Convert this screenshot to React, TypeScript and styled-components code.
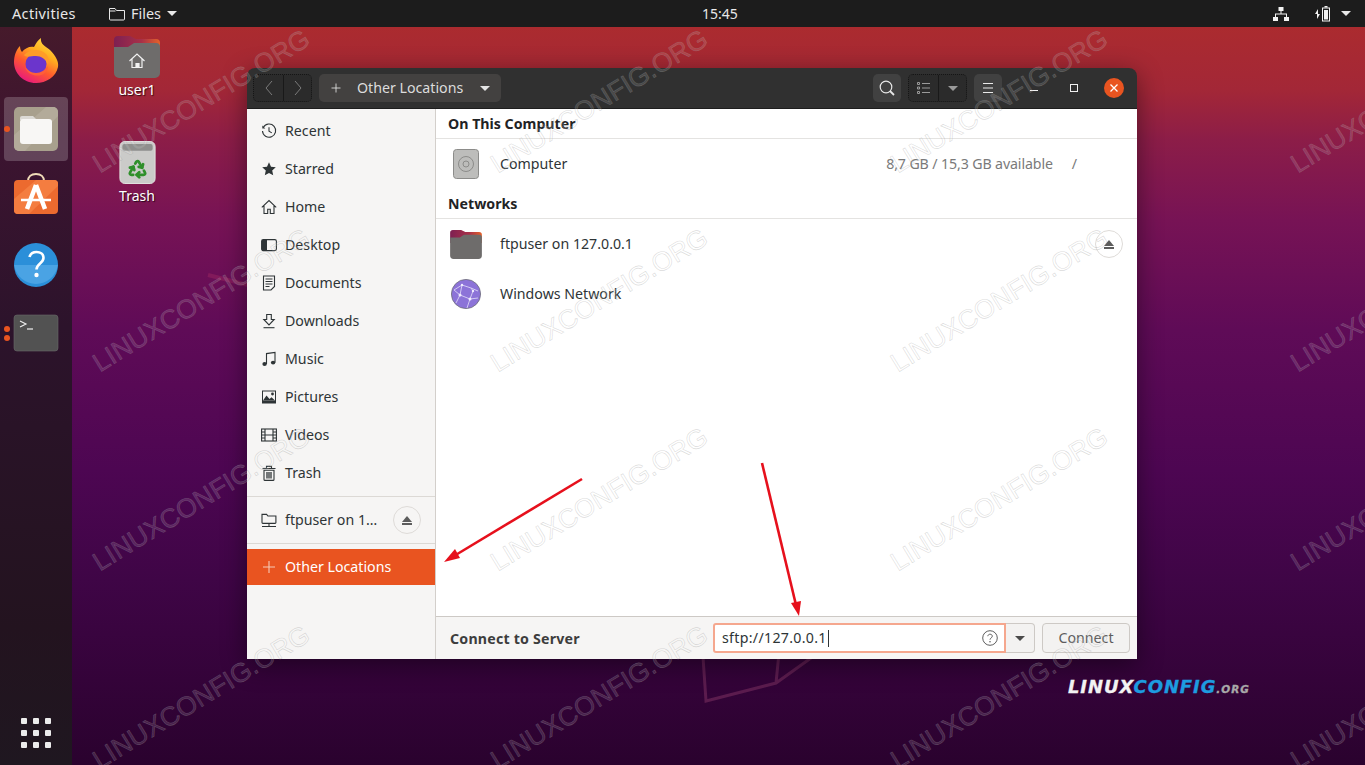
import React from 'react'
import styled, { createGlobalStyle } from 'styled-components'
import { Recycle } from 'lucide-react'

const Global = createGlobalStyle`
    html, body { margin: 0; padding: 0; background: #2c0330; }
    * { box-sizing: border-box; }
`

const UI = `"Noto Sans", "Open Sans", sans-serif`

const Screen = styled.div`
    position: relative;
    width: 1365px;
    height: 765px;
    overflow: hidden;
    font-family: ${UI};
    font-size: 14.2px;
    background: linear-gradient(180deg, #ab2b2f 27px, #a32737 90px, #8c1d48 140px, #771355 220px, #5f0b57 330px, #4d0652 470px, #3f0546 580px, #340339 680px, #2a022e 765px);
`

const TopBar = styled.header`
    position: relative;
    display: flex;
    align-items: center;
    height: 27px;
    padding: 0 14px 0 12px;
    background: #1c1c1c;
    color: #e8e8e8;
    font-size: 14px;
`

const Activities = styled.span`
    width: 97px;
    margin-top: -1px;
    font-size: 14.5px;
    letter-spacing: 0.35px;
`

const FilesMenu = styled.div`
    display: flex;
    align-items: center;
    width: 593px;
    gap: 6px;
    font-size: 14.4px;
`

const Clock = styled.span`
    letter-spacing: 0;
`

const Tray = styled.div`
    display: flex;
    align-items: center;
    margin-left: auto;
    gap: 11px;
`

const TrayIcon = styled.svg<{ $mr?: number }>`
    display: block;
    margin-right: ${p => p.$mr ?? 0}px;
`

const Caret = styled.i<{ $color?: string; $w?: number }>`
    display: block;
    width: 0;
    height: 0;
    border-left: ${p => p.$w ?? 5}px solid transparent;
    border-right: ${p => p.$w ?? 5}px solid transparent;
    border-top: ${p => p.$w ?? 5}px solid ${p => p.$color ?? '#e8e8e8'};
`

const Body = styled.div`
    display: flex;
    height: 738px;
`

const Dock = styled.nav`
    position: relative;
    display: flex;
    flex-direction: column;
    align-items: center;
    width: 72px;
    padding-top: 2px;
    gap: 4px;
    background: linear-gradient(180deg, #461a2b 0, #3c1430 120px, #2c132b 300px, #23131f 600px, #1f1720 738px);
`

const DockItem = styled.div<{ $active?: boolean }>`
    position: relative;
    display: flex;
    align-items: center;
    justify-content: center;
    width: 64px;
    height: 64px;
    border-radius: 4px;
    background: ${p => (p.$active ? 'rgba(255,255,255,0.2)' : 'transparent')};
`

const Pips = styled.div`
    position: absolute;
    left: 0;
    top: 0;
    bottom: 0;
    width: 6px;
    display: flex;
    flex-direction: column;
    justify-content: center;
    gap: 3px;
`

const Pip = styled.i`
    display: block;
    width: 6px;
    height: 6px;
    border-radius: 50%;
    background: #e95420;
`

const AppGrid = styled.div`
    display: grid;
    grid-template-columns: repeat(3, 6px);
    gap: 6px;
    margin-top: auto;
    margin-bottom: 17px;
`

const AppDot = styled.i`
    display: block;
    width: 6px;
    height: 6px;
    border-radius: 1px;
    background: #ececec;
`

const Desktop = styled.main`
    position: relative;
    flex: 1;
`

const WallShapes = styled.svg`
    position: absolute;
    left: 0;
    top: 0;
`

const DesktopIcon = styled.div<{ $x: number; $y: number }>`
    position: absolute;
    left: ${p => p.$x}px;
    top: ${p => p.$y}px;
    width: 90px;
    display: flex;
    flex-direction: column;
    align-items: center;
    gap: 2px;
    color: #fff;
    font-size: 14px;
    text-shadow: 1px 1px 1px rgba(0, 0, 0, 0.7);
`

const Win = styled.section`
    position: absolute;
    left: 175px;
    top: 41px;
    width: 890px;
    height: 591px;
    display: flex;
    flex-direction: column;
    border-radius: 8px 8px 0 0;
    box-shadow: 0 6px 26px rgba(0, 0, 0, 0.45);
    overflow: hidden;
`

const HeaderBar = styled.div`
    display: flex;
    align-items: center;
    height: 41px;
    flex: none;
    padding: 0 13px 0 6px;
    background: #303030;
    border-bottom: 1px solid #1d1d1d;
    color: #dfdfdf;
`

const Linked = styled.div<{ $ml?: number }>`
    display: flex;
    height: 28px;
    margin-left: ${p => p.$ml ?? 0}px;
    border: 1px dotted #151515;
    border-radius: 5px;
    background: #2b2b2b;
`

const LinkedBtn = styled.div<{ $w: number; $sep?: boolean }>`
    display: flex;
    align-items: center;
    justify-content: center;
    width: ${p => p.$w}px;
    border-left: ${p => (p.$sep ? '1px solid #191919' : 'none')};
`

const PathBtn = styled.div`
    display: flex;
    align-items: center;
    width: 183px;
    height: 28px;
    margin-left: 7px;
    padding: 0 11px;
    border-radius: 5px;
    background: #434140;
    color: #dcdcdc;
    font-size: 14.2px;
`

const PathLabel = styled.span`
    margin: -2px 0 0 15px;
    flex: 1;
`

const ToolBtn = styled.div<{ $ml: number }>`
    display: flex;
    align-items: center;
    justify-content: center;
    width: 28px;
    height: 28px;
    margin-left: ${p => p.$ml}px;
    border-radius: 5px;
    background: #414141;
`

const WinCtl = styled.div<{ $ml: number }>`
    display: flex;
    align-items: center;
    justify-content: center;
    width: 20px;
    height: 20px;
    margin-left: ${p => p.$ml}px;
`

const Minimize = styled.i`
    display: block;
    width: 8px;
    height: 1px;
    margin-top: 4px;
    background: #f0f0f0;
`

const Maximize = styled.i`
    display: block;
    width: 8px;
    height: 8px;
    border: 1px solid #f0f0f0;
`

const Close = styled.div`
    display: flex;
    align-items: center;
    justify-content: center;
    width: 20px;
    height: 20px;
    margin-left: 20px;
    border-radius: 50%;
    background: #e95420;
`

const Panes = styled.div`
    display: flex;
    flex: 1;
    min-height: 0;
`

const Sidebar = styled.aside`
    display: flex;
    flex-direction: column;
    width: 189px;
    padding-top: 3px;
    background: #f6f5f4;
    border-right: 1px solid #d3cfcb;
    color: #2e3436;
`

const SideRow = styled.div<{ $selected?: boolean; $mount?: boolean }>`
    display: flex;
    align-items: center;
    flex: none;
    height: ${p => (p.$selected ? 36 : p.$mount ? 46 : 38)}px;
    padding: 0 14px;
    gap: 8px;
    background: ${p => (p.$selected ? '#e95420' : 'transparent')};
    color: ${p => (p.$selected ? '#fff' : '#2e3436')};
`

const SideLabel = styled.span`
    margin-top: -2px;
`

const SideSep = styled.hr<{ $mt?: number; $mb?: number }>`
    width: 100%;
    margin: ${p => p.$mt ?? 0}px 0 ${p => p.$mb ?? 0}px;
    border: 0;
    border-top: 1px solid #dcd9d5;
`

const Eject = styled.div<{ $bg?: string }>`
    display: flex;
    flex-direction: column;
    align-items: center;
    justify-content: center;
    gap: 1px;
    width: 28px;
    height: 28px;
    margin-left: auto;
    border: 1px solid #dedbd8;
    border-radius: 50%;
    background: ${p => p.$bg ?? 'transparent'};
`

const EjectTri = styled.i`
    display: block;
    width: 0;
    height: 0;
    border-left: 5px solid transparent;
    border-right: 5px solid transparent;
    border-bottom: 6px solid #5c5c5c;
`

const EjectBar = styled.i`
    display: block;
    width: 10px;
    height: 2px;
    background: #5c5c5c;
`

const Content = styled.div`
    display: flex;
    flex-direction: column;
    flex: 1;
    min-width: 0;
    background: #fff;
`

const Places = styled.div`
    flex: 1;
    color: #2e3436;
`

const SectionTitle = styled.div<{ $h: number }>`
    display: flex;
    align-items: flex-end;
    height: ${p => p.$h}px;
    padding: 0 0 4px 12px;
    font-weight: 700;
    font-size: 14.2px;
    line-height: 20px;
    color: #1f2325;
    border-bottom: 1px solid #e4e3e1;
`

const PlaceRow = styled.div`
    display: flex;
    align-items: center;
    height: 50px;
    padding: 0 14px;
`

const PlaceIcon = styled.div`
    display: flex;
    align-items: center;
    justify-content: center;
    width: 32px;
    margin-right: 18px;
`

const PlaceLabel = styled.span`
    margin-top: -2px;
`

const Storage = styled.span`
    display: flex;
    gap: 19px;
    margin: -2px 46px 0 auto;
    color: #7a7a7a;
    letter-spacing: -0.12px;
`

const ConnectBar = styled.div`
    display: flex;
    align-items: center;
    flex: none;
    height: 43px;
    padding: 0 7px 0 14px;
    background: #f6f5f4;
    border-top: 1px solid #cdc9c5;
`

const ConnectLabel = styled.span`
    width: 263px;
    font-weight: 700;
    font-size: 14.2px;
    letter-spacing: 0.2px;
    color: #3d3d3d;
`

const Field = styled.div`
    display: flex;
    align-items: center;
    width: 293px;
    height: 30px;
    padding: 0 6px 0 7px;
    background: #fff;
    border: 2px solid #f5a78e;
    border-radius: 3px 0 0 3px;
    color: #2e3436;
`

const FieldText = styled.span`
    margin-top: -2px;
    letter-spacing: 0.3px;
`

const CaretBar = styled.i`
    display: block;
    width: 1px;
    height: 17px;
    margin-left: 1px;
    background: #2e3436;
`

const FieldHelp = styled.div`
    display: flex;
    margin-left: auto;
`

const ComboBtn = styled.div`
    display: flex;
    align-items: center;
    justify-content: center;
    width: 29px;
    height: 30px;
    background: #f3f2f1;
    border: 1px solid #cdc9c5;
    border-left: 0;
    border-radius: 0 4px 4px 0;
`

const ConnectBtn = styled.div`
    display: flex;
    align-items: center;
    justify-content: center;
    width: 88px;
    height: 30px;
    padding-bottom: 2px;
    margin-left: 7px;
    background: #f3f2f1;
    border: 1px solid #cdc9c5;
    border-radius: 4px;
    color: #5d5d5d;
`

const Marks = styled.div`
    position: absolute;
    inset: 0;
    pointer-events: none;
`

const Mark = styled.span<{ $x: number; $y: number }>`
    position: absolute;
    left: ${p => p.$x}px;
    top: ${p => p.$y}px;
    font-family: "Liberation Sans", Arial, sans-serif;
    font-size: 26.5px;
    line-height: 1;
    white-space: nowrap;
    transform-origin: 0 100%;
    transform: rotate(-31.5deg);
    color: rgba(255, 255, 255, 0.14);
    -webkit-text-stroke: 0.6px rgba(150, 150, 150, 0.35);
`

const Arrows = styled.svg`
    position: absolute;
    left: 0;
    top: 0;
    pointer-events: none;
`

const Brand = styled.div`
    position: absolute;
    left: 1068px;
    top: 675px;
    font-family: "DejaVu Sans", "Liberation Sans", sans-serif;
    font-style: italic;
    font-weight: 700;
    font-size: 18px;
    line-height: 24px;
    letter-spacing: 0.9px;
    -webkit-text-stroke: 0.3px currentColor;
    color: #f2f2f2;
    white-space: nowrap;
`

const BrandBlue = styled.span`
    color: #1d9ce0;
`

const BrandTld = styled.span`
    color: #a9a9a9;
    font-size: 10.5px;
    letter-spacing: 1px;
`

const Glyph = ({ size = 16, children, color = '#2e3436' }: { size?: number; children: React.ReactNode; color?: string }) => (
    <svg width={size} height={size} viewBox='0 0 16 16' fill='none' stroke={color} strokeWidth='1.1' style={{ flex: 'none', color }}>
        {children}
    </svg>
)

const sideIcons: Record<string, React.ReactNode> = {
    recent: (
        <>
            <path d='M2.4 4.3A6.6 6.6 0 1 1 1.5 8' />
            <path d='M1.3 2.5v3h3' fill='currentColor' stroke='none' />
            <path d='M8 4.2v4l2.8 1.7' />
        </>
    ),
    starred: <path d='M8 1.3l2 4.5 4.8.5-3.6 3.2 1 4.8L8 11.9l-4.2 2.4 1-4.8L1.2 6.3 6 5.8z' fill='currentColor' stroke='none' />,
    home: <path d='M.8 8.3L8 1.6l7.2 6.7M3 6.500v8h3.700v-4.300h2.600v4.300H13v-8' />,
    desktop: (
        <>
            <rect x='.6' y='2.6' width='14.8' height='11' rx='1.6' />
            <path d='M1 3h5v10.4H1z' fill='currentColor' stroke='none' />
        </>
    ),
    documents: (
        <>
            <path d='M2.5 1h11v10.500L10 15H2.500z' />
            <path d='M4.500 4h7M4.500 6.500h7M4.500 9h7M4.500 11.500h4' />
        </>
    ),
    downloads: (
        <>
            <path d='M5.700 1.500h4.600v5h2.900L8 12 2.800 6.500h2.900z' />
            <path d='M2.500 14.700h11' />
        </>
    ),
    music: (
        <>
            <path d='M5.500 13V2.600l8.500-1.200v10' />
            <ellipse cx='3.600' cy='13' rx='2.200' ry='1.900' fill='currentColor' stroke='none' />
            <ellipse cx='12.100' cy='11.600' rx='2.200' ry='1.900' fill='currentColor' stroke='none' />
        </>
    ),
    pictures: (
        <>
            <rect x='1' y='1.500' width='14' height='13' fill='currentColor' stroke='none' />
            <rect x='2' y='2.500' width='12' height='9' fill='#f6f5f4' stroke='none' />
            <path d='M2 11.500l3.500-5 3 3.500 2-1.800 3.500 3.300z' fill='currentColor' stroke='none' />
            <circle cx='11.500' cy='5' r='1.400' fill='currentColor' stroke='none' />
        </>
    ),
    videos: (
        <>
            <rect x='.6' y='2' width='14.800' height='12' />
            <path d='M4 2v12M12 2v12M.6 5h3.400M.6 8h3.400M.6 11h3.400M12 5h3.400M12 8h3.400M12 11h3.400M4 8h8' />
        </>
    ),
    trash: (
        <>
            <path d='M1.500 3.500h13M5.500 3.300V1.400h5v1.900' />
            <path d='M3 5.200h10v9.200a1 1 0 0 1-1 1H4a1 1 0 0 1-1-1z' />
            <path d='M6 7v6.500M8 7v6.500M10 7v6.500' strokeWidth='1.300' />
        </>
    ),
    network: (
        <>
            <path d='M1 10.600V2.400h4.600l1.300 1.600h8v6.600a.8.8 0 0 1-.8.8H1.800a.8.8 0 0 1-.8-.8z' />
            <path d='M1 14.500h14M8 11.500v3' />
        </>
    ),
    plus: <path d='M8 2v12M2 8h12' />,
}

const sidebarItems = [
    ['recent', 'Recent'],
    ['starred', 'Starred'],
    ['home', 'Home'],
    ['desktop', 'Desktop'],
    ['documents', 'Documents'],
    ['downloads', 'Downloads'],
    ['music', 'Music'],
    ['pictures', 'Pictures'],
    ['videos', 'Videos'],
    ['trash', 'Trash'],
]

const FolderArt = ({ w, h, home }: { w: number; h: number; home?: boolean }) => (
    <svg width={w} height={h} viewBox='0 0 46 42'>
        <defs>
            <linearGradient id={home ? 'tabA' : 'tabB'} x1='0' x2='1' y1='0' y2='0'>
                <stop offset='0' stopColor='#7d2052' />
                <stop offset='0.6' stopColor='#a83048' />
                <stop offset='1' stopColor='#e4622a' />
            </linearGradient>
        </defs>
        <path d='M0 4a4 4 0 0 1 4-4h12l6 3h20a4 4 0 0 1 4 4v12H0z' fill={`url(#${home ? 'tabA' : 'tabB'})`} />
        <path d='M0 11h14l6-4h22a4 4 0 0 1 4 4v26a5 5 0 0 1-5 5H5a5 5 0 0 1-5-5z' fill='#6e6c6b' />
        {home && (
            <g fill='none' stroke='#f2f2f2' strokeWidth='1.200'>
                <path d='M15.500 25l7.500-7 7.500 7M18 23v8.500h10V23' />
                <path d='M22 31.500v-4h3v4' fill='#f2f2f2' />
            </g>
        )}
    </svg>
)

const TrashArt = () => (
    <svg width='37' height='43' viewBox='0 0 37 44'>
        <rect x='.5' y='.5' width='36' height='43' rx='5' fill='#cbcbc9' stroke='#e2e2e0' />
        <rect x='3' y='3' width='31' height='7' rx='2' fill='#8f8f8d' />
        <Recycle x={8} y={18} size={21} color='#2f8f2a' strokeWidth={3.2} />
    </svg>
)

const Firefox = () => (
    <svg width='48' height='48' viewBox='0 0 48 48'>
        <defs>
            <linearGradient id='ffBody' x1='0.85' y1='0' x2='0.3' y2='1'>
                <stop offset='0' stopColor='#ffe24a' />
                <stop offset='0.35' stopColor='#ffb01f' />
                <stop offset='0.65' stopColor='#ff5a2e' />
                <stop offset='1' stopColor='#e8187e' />
            </linearGradient>
        </defs>
        <path d='M29 1c-1 6 4 8 9 12 6 6 9 12 8 17-2 10-12 16-22 16C11 46 2 36 2 25 2 19 4 13 8 9c0 3 1 5 2 6 3-4 8-6 12-5 2-4 4-7 7-9z' fill='url(#ffBody)' />
        <circle cx='24' cy='27' r='10.500' fill='#6b35cc' />
        <path d='M12 18c6-6 16-7 22-1 3 3 3 7 2 11-2-6-7-9-12-9-5 0-10 2-12-1z' fill='#ff9c28' />
        <path d='M13 30c2 7 10 10 16 8 4-1 7-5 7-9-3 4-7 7-12 7-5 0-8-3-11-6z' fill='#ff5f38' />
    </svg>
)

const FilesTile = () => (
    <svg width='48' height='48' viewBox='0 0 48 48'>
        <rect x='2' y='2' width='44' height='44' rx='5' fill='#a8a08d' />
        <path d='M2 30L34 2h7a5 5 0 0 1 5 5v4L13 46H7a5 5 0 0 1-5-5z' fill='#b3ab9a' />
        <path d='M8 13a2 2 0 0 1 2-2h11l4 4H8z' fill='#dcdad5' />
        <rect x='8' y='14' width='32' height='25' rx='3' fill='#f8f7f5' />
    </svg>
)

const SoftwareTile = () => (
    <svg width='48' height='48' viewBox='0 0 48 48'>
        <path d='M16 8c0-4 3-7 8-7s8 3 8 7' fill='none' stroke='#f0dcb8' strokeWidth='2' />
        <rect x='2' y='7' width='44' height='34' rx='4' fill='#ec6a2f' />
        <path d='M2 26L24 7h18a4 4 0 0 1 4 4v2L17 41H6a4 4 0 0 1-4-4z' fill='#f47d40' />
        <path d='M24 12l-9 24M24 12l9 24' fill='none' stroke='#fff' strokeWidth='4.500' />
        <path d='M9 27h30' stroke='#fff' strokeWidth='2.500' />
    </svg>
)

const HelpTile = () => (
    <svg width='48' height='48' viewBox='0 0 48 48'>
        <circle cx='24' cy='24' r='22' fill='#2b8fd9' />
        <path d='M2.200 24a22 22 0 0 0 43.600 0z' fill='#4aa3e4' />
        <path d='M17.500 16c1-3.500 4-5 7-5 4 0 7 2.300 7 5.800 0 5.700-7 5.700-7 11.700' fill='none' stroke='#fff' strokeWidth='2.600' />
        <circle cx='24.500' cy='34' r='2.200' fill='#fff' />
    </svg>
)

const TerminalTile = () => (
    <svg width='48' height='48' viewBox='0 0 48 48'>
        <rect x='2' y='6' width='44' height='36' rx='3' fill='#525252' stroke='#6a6a6a' strokeWidth='.6' />
        <path d='M8 12l6 3-6 3' fill='none' stroke='#f2f2f2' strokeWidth='1.100' />
        <path d='M15 20h6' stroke='#f2f2f2' strokeWidth='1.200' />
    </svg>
)

const marks: [number, number][] = []
for (const x of [102, 500, 900, 1300]) {
    for (const y of [151, 350, 549, 747]) {
        marks.push([x, y])
    }
}

export default function App() {
    return (
        <Screen>
            <Global />
            <TopBar>
                <Activities>Activities</Activities>
                <FilesMenu>
                    <svg width='16' height='14' viewBox='0 0 16 14' fill='none' stroke='#e8e8e8' strokeWidth='1'>
                        <path d='M.5 12V1.500h5.500l1.500 2h8V12a1 1 0 0 1-1 1h-13a1 1 0 0 1-1-1zM.5 4h6' />
                    </svg>
                    Files
                    <Caret />
                </FilesMenu>
                <Clock>15:45</Clock>
                <Tray>
                    <TrayIcon $mr={15} width='16' height='14' viewBox='0 0 16 14' fill='#f2f2f2'>
                        <rect x='5.500' y='0' width='5' height='4' />
                        <rect x='0' y='10' width='5' height='4' />
                        <rect x='11' y='10' width='5' height='4' />
                        <path d='M7.500 4h1v2.500H14V10h-1V7.500H3V10H2V6.500h5.500z' />
                    </TrayIcon>
                    <TrayIcon width='15' height='16' viewBox='0 0 15 16' fill='none'>
                        <path d='M3 3L0 8h2v5l3-5H3z' fill='#f2f2f2' />
                        <rect x='7.500' y='2' width='7' height='13' stroke='#f2f2f2' />
                        <rect x='9' y='4' width='4' height='9.500' fill='#f2f2f2' />
                        <rect x='9.500' y='0' width='3' height='1.500' fill='#f2f2f2' />
                    </TrayIcon>
                    <Caret />
                </Tray>
            </TopBar>
            <Body>
                <Dock>
                    <DockItem>
                        <Firefox />
                    </DockItem>
                    <DockItem $active>
                        <Pips>
                            <Pip />
                        </Pips>
                        <FilesTile />
                    </DockItem>
                    <DockItem>
                        <SoftwareTile />
                    </DockItem>
                    <DockItem>
                        <HelpTile />
                    </DockItem>
                    <DockItem>
                        <Pips>
                            <Pip />
                            <Pip />
                        </Pips>
                        <TerminalTile />
                    </DockItem>
                    <AppGrid>
                        {Array.from({ length: 9 }, (_, i) => (
                            <AppDot key={i} />
                        ))}
                    </AppGrid>
                </Dock>
                <Desktop>
                    <WallShapes width='1293' height='738' viewBox='0 0 1293 738' fill='none'>
                        <path d='M631 630l3 44 70-18 42-30M704 656l3-30' stroke='rgba(255,130,170,0.2)' strokeWidth='3' />
                        <path d='M136 248l40 10' stroke='rgba(255,90,120,0.16)' strokeWidth='4' />
                    </WallShapes>
                    <DesktopIcon $x={20} $y={9}>
                        <FolderArt w={46} h={42} home />
                        user1
                    </DesktopIcon>
                    <DesktopIcon $x={20} $y={114}>
                        <TrashArt />
                        Trash
                    </DesktopIcon>
                    <Win>
                        <HeaderBar>
                            <Linked>
                                <LinkedBtn $w={29}>
                                    <svg width='10' height='16' viewBox='0 0 10 16' fill='none' stroke='#7b7b7b'>
                                        <path d='M8 1L2 8l6 7' />
                                    </svg>
                                </LinkedBtn>
                                <LinkedBtn $w={28} $sep>
                                    <svg width='10' height='16' viewBox='0 0 10 16' fill='none' stroke='#7b7b7b'>
                                        <path d='M2 1l6 7-6 7' />
                                    </svg>
                                </LinkedBtn>
                            </Linked>
                            <PathBtn>
                                <Glyph size={12} color='#e8e8e8'>
                                    {sideIcons.plus}
                                </Glyph>
                                <PathLabel>Other Locations</PathLabel>
                                <Caret $color='#e4e4e4' />
                            </PathBtn>
                            <ToolBtn $ml={372}>
                                <svg width='16' height='16' viewBox='0 0 16 16' fill='none' stroke='#e8e8e8' strokeWidth='1.200'>
                                    <circle cx='7' cy='7' r='5.800' />
                                    <path d='M11 11l4 4' strokeWidth='1.800' />
                                </svg>
                            </ToolBtn>
                            <Linked $ml={7}>
                                <LinkedBtn $w={29}>
                                    <svg width='13' height='12' viewBox='0 0 13 12' fill='none' stroke='#9a9a9a'>
                                        <path d='M5 1.500h8M5 6h8M5 10.500h8M.5.500h2v2h-2zM.5 5h2v2h-2zM.5 9.500h2v2h-2z' />
                                    </svg>
                                </LinkedBtn>
                                <LinkedBtn $w={28} $sep>
                                    <Caret $color='#9a9a9a' />
                                </LinkedBtn>
                            </Linked>
                            <ToolBtn $ml={7}>
                                <svg width='12' height='10' viewBox='0 0 12 10' stroke='#eaeaea'>
                                    <path d='M1 .500h10M1 5h10M1 9.500h10' />
                                </svg>
                            </ToolBtn>
                            <WinCtl $ml={22}>
                                <Minimize />
                            </WinCtl>
                            <WinCtl $ml={20}>
                                <Maximize />
                            </WinCtl>
                            <Close>
                                <svg width='10' height='10' viewBox='0 0 10 10' stroke='#fff' strokeWidth='1.300'>
                                    <path d='M1.500 1.500l7 7M8.500 1.500l-7 7' />
                                </svg>
                            </Close>
                        </HeaderBar>
                        <Panes>
                            <Sidebar>
                                {sidebarItems.map(([icon, label]) => (
                                    <SideRow key={icon}>
                                        <Glyph>{sideIcons[icon]}</Glyph>
                                        <SideLabel>{label}</SideLabel>
                                    </SideRow>
                                ))}
                                <SideSep $mt={4} />
                                <SideRow $mount>
                                    <Glyph>{sideIcons.network}</Glyph>
                                    <SideLabel>ftpuser on 1…</SideLabel>
                                    <Eject>
                                        <EjectTri />
                                        <EjectBar />
                                    </Eject>
                                </SideRow>
                                <SideSep $mb={5} />
                                <SideRow $selected>
                                    <Glyph color='#f6c9b6'>{sideIcons.plus}</Glyph>
                                    <SideLabel>Other Locations</SideLabel>
                                </SideRow>
                            </Sidebar>
                            <Content>
                                <Places>
                                    <SectionTitle $h={30}>On This Computer</SectionTitle>
                                    <PlaceRow>
                                        <PlaceIcon>
                                            <svg width='26' height='30' viewBox='0 0 26 30'>
                                                <rect x='.5' y='.5' width='25' height='29' rx='3' fill='#bdbdbb' stroke='#8c8c8a' />
                                                <circle cx='13' cy='15' r='7.500' fill='none' stroke='#8c8c8a' />
                                                <circle cx='13' cy='15' r='3' fill='none' stroke='#8c8c8a' />
                                            </svg>
                                        </PlaceIcon>
                                        <PlaceLabel>Computer</PlaceLabel>
                                        <Storage>
                                            <span>8,7 GB / 15,3 GB available</span>
                                            <span>/</span>
                                        </Storage>
                                    </PlaceRow>
                                    <SectionTitle $h={30}>Networks</SectionTitle>
                                    <PlaceRow>
                                        <PlaceIcon>
                                            <FolderArt w={32} h={29} />
                                        </PlaceIcon>
                                        <PlaceLabel>ftpuser on 127.0.0.1</PlaceLabel>
                                        <Eject $bg='#fff'>
                                            <EjectTri />
                                            <EjectBar />
                                        </Eject>
                                    </PlaceRow>
                                    <PlaceRow>
                                        <PlaceIcon>
                                            <svg width='30' height='30' viewBox='0 0 30 30'>
                                                <circle cx='15' cy='15' r='14.600' fill='#8c73d8' stroke='#6d6d78' strokeWidth='.8' />
                                                <g stroke='#d9d2f5' strokeWidth='.9' fill='none'>
                                                    <path d='M3 11l8-5 9 3 7 3M11 6l-2 10 10 4 3-8M9 16l-6-5M9 16l-4 8M19 20l-3 9M19 20l8-1M20 9l2 3' />
                                                </g>
                                                <g fill='#efeaff'>
                                                    <circle cx='11' cy='6' r='1.200' />
                                                    <circle cx='9' cy='16' r='1.500' />
                                                    <circle cx='19' cy='20' r='1.500' />
                                                    <circle cx='22' cy='12' r='1.200' />
                                                </g>
                                            </svg>
                                        </PlaceIcon>
                                        <PlaceLabel>Windows Network</PlaceLabel>
                                    </PlaceRow>
                                </Places>
                                <ConnectBar>
                                    <ConnectLabel>Connect to Server</ConnectLabel>
                                    <Field>
                                        <FieldText>sftp://127.0.0.1</FieldText>
                                        <CaretBar />
                                        <FieldHelp>
                                            <svg width='16' height='16' viewBox='0 0 16 16' fill='none' stroke='#5e5e5e'>
                                                <circle cx='8' cy='8' r='7.300' />
                                                <path d='M5.800 6.200C6 4.800 7 4.200 8 4.200c1.300 0 2.300.8 2.300 2 0 1.700-2.300 1.700-2.300 3.500' />
                                                <circle cx='8' cy='11.800' r='.8' fill='#5e5e5e' stroke='none' />
                                            </svg>
                                        </FieldHelp>
                                    </Field>
                                    <ComboBtn>
                                        <Caret $color='#4a4a4a' />
                                    </ComboBtn>
                                    <ConnectBtn>Connect</ConnectBtn>
                                </ConnectBar>
                            </Content>
                        </Panes>
                    </Win>
                </Desktop>
            </Body>
            <Marks>
                {marks.map(([x, y]) => (
                    <Mark key={`${x}-${y}`} $x={x} $y={y}>
                        LINUXCONFIG.ORG
                    </Mark>
                ))}
            </Marks>
            <Arrows width='1365' height='765' viewBox='0 0 1365 765'>
                <path d='M582 479L454 556' stroke='#e6101c' strokeWidth='2.600' fill='none' />
                <path d='M444 562l11-13 5 9z' fill='#e6101c' />
                <path d='M762 463l34 142' stroke='#e6101c' strokeWidth='2.600' fill='none' />
                <path d='M799 616l-8-13 10-2z' fill='#e6101c' />
            </Arrows>
            <Brand>
                LINUX<BrandBlue>CONFIG</BrandBlue>
                <BrandTld>.ORG</BrandTld>
            </Brand>
        </Screen>
    )
}
